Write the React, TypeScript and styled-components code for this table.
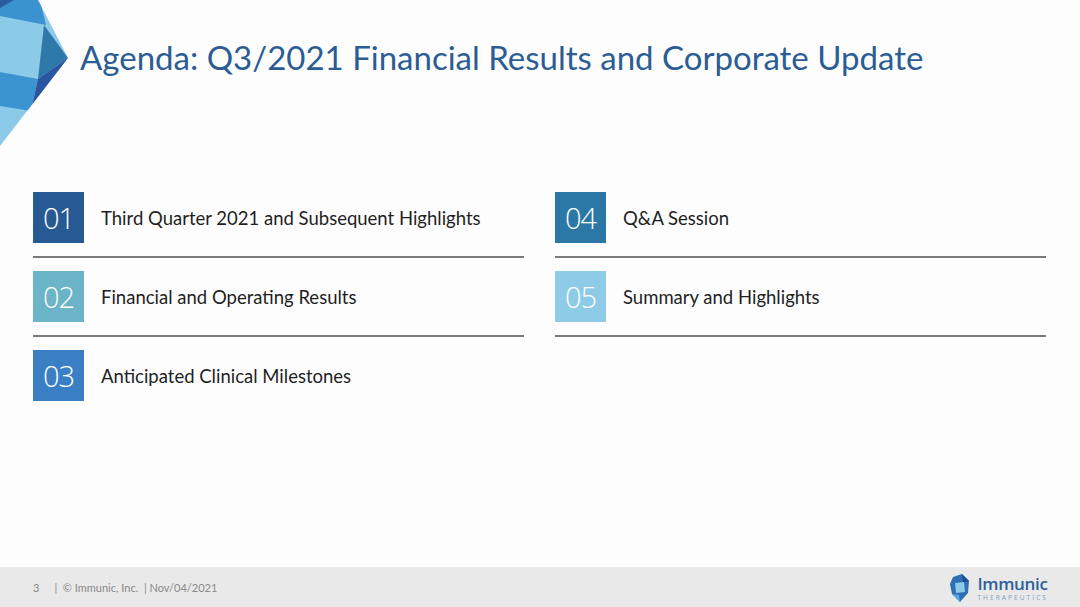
import styled, { createGlobalStyle } from 'styled-components';

const GlobalStyle = createGlobalStyle`
  html, body {
    margin: 0;
    padding: 0;
    background: #fdfdfd;
  }
  * {
    box-sizing: border-box;
  }
`;

type Item = { num: string; label: string; color: string };

const leftItems: Item[] = [
  { num: '01', label: 'Third Quarter 2021 and Subsequent Highlights', color: '#275a93' },
  { num: '02', label: 'Financial and Operating Results', color: '#6cb4c7' },
  { num: '03', label: 'Anticipated Clinical Milestones', color: '#3a7fc4' },
];

const rightItems: Item[] = [
  { num: '04', label: 'Q&A Session', color: '#2b77a6' },
  { num: '05', label: 'Summary and Highlights', color: '#8dcbe7' },
];

const Corner = () => (
  <CornerSvg viewBox="0 0 68 146" width="68" height="146">
    <defs>
      <clipPath id="gem">
        <polygon points="0,0 38,0 68,58 0,146" />
      </clipPath>
    </defs>
    <g clipPath="url(#gem)">
      <rect x="0" y="0" width="68" height="146" fill="#8ccbe7" />
      <polygon points="0,0 40,0 46,25 0,16" fill="#3a93cf" />
      <polygon points="0,0 14,0 0,8" fill="#2c5aa0" />
      <polygon points="44,25 68,58 38,79" fill="#2f79aa" />
      <polygon points="0,72 38,79 31,111 0,106" fill="#3b93cf" />
      <polygon points="68,58 38,79 31,111 35,112" fill="#2b55a0" />
    </g>
  </CornerSvg>
);

const LogoMark = () => (
  <svg viewBox="0 0 20 28" width="20" height="28">
    <polygon points="3,3 12,0 19,7 18,19 10,28 2,20 0,10" fill="#2f6fb4" />
    <polygon points="12,0 19,7 13,9" fill="#1f4f8f" />
    <polygon points="2,20 10,28 9,21" fill="#5aa7dc" />
    <polygon points="5,9 14,8 15,18 6,19" fill="#8ccbe7" />
  </svg>
);

const AgendaRow = ({ item, last }: { item: Item; last?: boolean }) => (
  <RowWrap>
    <Row>
      <NumBox $bg={item.color}>{item.num}</NumBox>
      <Label>{item.label}</Label>
    </Row>
    {!last && <Rule />}
  </RowWrap>
);

export default function App() {
  return (
    <>
      <GlobalStyle />
      <Slide>
        <Header>
          <Corner />
          <Title>Agenda: Q3/2021 Financial Results and Corporate Update</Title>
        </Header>
        <Columns>
          <Column>
            {leftItems.map((it, i) => (
              <AgendaRow key={it.num} item={it} last={i === leftItems.length - 1} />
            ))}
          </Column>
          <Column>
            {rightItems.map((it) => (
              <AgendaRow key={it.num} item={it} />
            ))}
          </Column>
        </Columns>
        <Footer>
          <FooterText>
            <span>3</span>
            <span>|&nbsp; © Immunic, Inc.&nbsp; | Nov/04/2021</span>
          </FooterText>
          <Logo>
            <LogoMark />
            <LogoWords>
              <LogoName>Immunic</LogoName>
              <LogoSub>THERAPEUTICS</LogoSub>
            </LogoWords>
          </Logo>
        </Footer>
      </Slide>
    </>
  );
}

const Slide = styled.div`
  width: 1080px;
  height: 607px;
  display: flex;
  flex-direction: column;
  background: #fdfdfd;
  overflow: hidden;
  font-family: Lato, 'Open Sans', sans-serif;
`;

const Header = styled.div`
  display: flex;
  align-items: flex-start;
  gap: 12px;
  height: 192px;
`;

const CornerSvg = styled.svg`
  flex: none;
  display: block;
`;

const Title = styled.h1`
  margin: 0;
  padding-top: 37px;
  color: #2b5d94;
  font-family: Lato, 'Open Sans', sans-serif;
  font-size: 33px;
  font-weight: 400;
  line-height: 40px;
  white-space: nowrap;
`;

const Columns = styled.div`
  display: grid;
  grid-template-columns: 491px 491px;
  column-gap: 31px;
  padding-left: 33px;
  flex: 1;
`;

const Column = styled.div`
  display: flex;
  flex-direction: column;
`;

const RowWrap = styled.div`
  display: flex;
  flex-direction: column;
`;

const Row = styled.div`
  display: flex;
  align-items: center;
  gap: 17px;
  height: 51px;
`;

const NumBox = styled.div<{ $bg: string }>`
  width: 51px;
  height: 51px;
  flex: none;
  display: flex;
  align-items: center;
  justify-content: center;
  background: ${(p) => p.$bg};
  color: #ffffff;
  font-family: 'Open Sans', Lato, sans-serif;
  font-weight: 300;
  font-size: 29px;
  letter-spacing: -1px;
`;

const Label = styled.div`
  color: #1f1f1f;
  font-size: 18.5px;
  font-family: Lato, 'Open Sans', sans-serif;
  padding-top: 1px;
`;

const Rule = styled.div`
  height: 2px;
  background: #7a7a7a;
  margin: 13px 0 13px;
`;

const Footer = styled.div`
  height: 40px;
  flex: none;
  background: #e9e9e9;
  display: flex;
  align-items: center;
  justify-content: space-between;
  padding: 0 32px 0 33px;
`;

const FooterText = styled.div`
  display: flex;
  gap: 15px;
  color: #8a8a8a;
  font-size: 11px;
  font-family: Lato, 'Open Sans', sans-serif;
`;

const Logo = styled.div`
  display: flex;
  align-items: center;
  gap: 7px;
  padding-top: 2px;
`;

const LogoWords = styled.div`
  display: flex;
  flex-direction: column;
  gap: 2px;
`;

const LogoName = styled.div`
  color: #2d5f9d;
  font-family: 'Open Sans', Lato, sans-serif;
  font-weight: 600;
  font-size: 17px;
  line-height: 17px;
  height: 17px;
  letter-spacing: -0.3px;
`;

const LogoSub = styled.div`
  color: #7ea3c2;
  font-family: 'Open Sans', Lato, sans-serif;
  font-size: 6.5px;
  line-height: 7px;
  height: 7px;
  letter-spacing: 2.1px;
`;
